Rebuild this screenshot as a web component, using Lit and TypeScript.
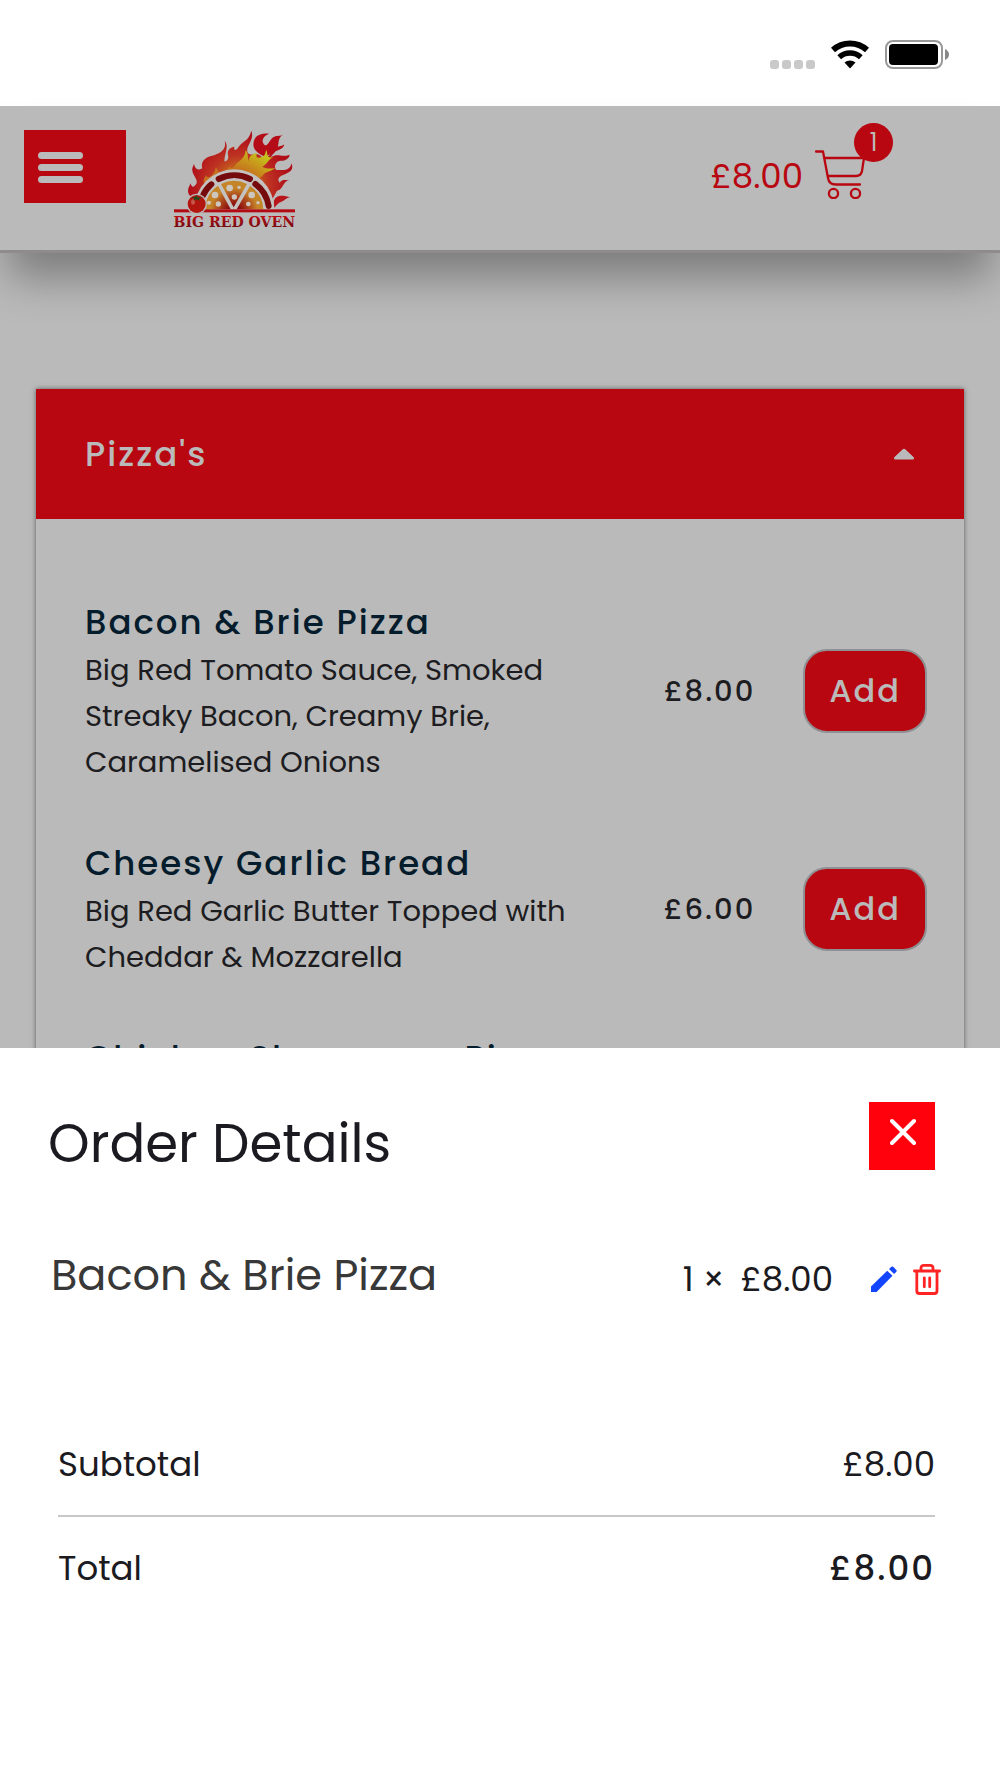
import { LitElement, html, css, svg, nothing } from "lit";
import { customElement, property, state } from "lit/decorators.js";

interface Dish {
  name: string;
  description?: string;
  price?: string;
}

const DISHES: Dish[] = [
  {
    name: "Bacon & Brie Pizza",
    description: "Big Red Tomato Sauce, Smoked Streaky Bacon, Creamy Brie, Caramelised Onions",
    price: "£8.00",
  },
  {
    name: "Cheesy Garlic Bread",
    description: "Big Red Garlic Butter Topped with Cheddar & Mozzarella",
    price: "£6.00",
  },
  {
    name: "Chicken Shawarma Pizza",
  },
];

@customElement("status-bar")
export class StatusBar extends LitElement {
  static styles = css`
    :host {
      display: flex;
      justify-content: flex-end;
      align-items: flex-end;
      gap: 16px;
      padding: 40px 51px 37px;
      background: #fff;
    }
    svg {
      display: block;
    }
  `;

  render() {
    return html`
      <svg width="45" height="29" viewBox="0 0 45 29" fill="#c9c9c9" aria-hidden="true">
        ${[0, 12, 24, 36].map((x) => svg`<rect x=${x} y="20" width="9" height="9" rx="3" />`)}
      </svg>
      <svg width="38" height="29" viewBox="0 0 38 29" fill="none" stroke="#000" aria-hidden="true">
        <path d="M2 10 A25.5 25.5 0 0 1 36 10" stroke-width="6" />
        <path d="M8.200 17.200 A16 16 0 0 1 29.800 17.200" stroke-width="5.500" />
        <path d="M19 28.500 L13.500 22.600 A8 8 0 0 1 24.500 22.600 Z" fill="#000" stroke="none" />
      </svg>
      <svg width="64" height="29" viewBox="0 0 64 29" aria-hidden="true">
        <rect x="1" y="1" width="56" height="27" rx="7" fill="none" stroke="#999" stroke-width="2" />
        <rect x="4" y="4" width="49" height="21" rx="4" fill="#000" />
        <path d="M60 9 Q64 11 64 14.500 Q64 18 60 20 Z" fill="#888" />
      </svg>
    `;
  }
}

@customElement("oven-logo")
export class OvenLogo extends LitElement {
  static styles = css`
    :host {
      display: block;
    }
    svg {
      display: block;
      overflow: visible;
    }
    .word {
      font: bold 47px "DejaVu Serif Condensed", "DejaVu Serif", serif;
    }
  `;

  render() {
    return html`
      <svg width="121" height="98" viewBox="27 24 363 294" role="img" aria-label="Big Red Oven">
        <defs>
          <radialGradient id="fire" gradientUnits="userSpaceOnUse" cx="222" cy="190" r="165">
            <stop offset="0" stop-color="#c98a1c" />
            <stop offset="0.3" stop-color="#c4651d" />
            <stop offset="0.55" stop-color="#bd3222" />
            <stop offset="0.9" stop-color="#b00f19" />
          </radialGradient>
          <radialGradient id="glow" gradientUnits="userSpaceOnUse" cx="190" cy="262" r="200">
            <stop offset="0.6" stop-color="#c66f1d" />
            <stop offset="0.8" stop-color="#c89a1c" />
            <stop offset="0.95" stop-color="#c4bf1c" />
          </radialGradient>
          <radialGradient id="slice" gradientUnits="userSpaceOnUse" cx="207" cy="268" r="88">
            <stop offset="0.2" stop-color="#8a0b0e" />
            <stop offset="0.55" stop-color="#ad4a1c" />
            <stop offset="0.8" stop-color="#c48529" />
          </radialGradient>
          <linearGradient id="ink" x1="0" y1="0" x2="0" y2="1">
            <stop offset="0.2" stop-color="#c00c15" />
            <stop offset="1" stop-color="#5e090b" />
          </linearGradient>
        </defs>

        <path fill="url(#fire)" d="M80 226 C62 212 70 198 77 184 C79 196 86 198 93 187 C102 174 82 160 82 145 C80 137 86 131 87 125
          C90 143 103 146 112 139 C106 120 120 105 142 101 C164 95 186 84 179 56 C193 74 178 96 178 118 C186 118 192 112 189 98
          C186 84 196 76 208 74 C206 86 212 88 220 76 C230 58 252 58 259 26 C270 56 240 72 248 92 C258 104 276 92 284 100
          L300 112 C316 96 332 82 338 62 C345 84 322 94 318 106 C338 92 350 108 374 98 C372 112 356 118 346 116 C330 118 326 136 334 144
          C350 142 372 152 380 124 C388 148 368 152 356 158 C340 164 336 172 344 182 C352 170 362 176 372 174 C352 180 356 202 336 206
          L326 224 L300 260 L110 260 Z" />
        <path fill="#b50d17" d="M300 104 C272 92 262 78 266 60 C270 38 292 34 312 35 C292 44 288 58 298 68 C306 76 312 58 322 48
          C332 38 344 44 353 38 C334 52 346 70 334 76 C348 70 354 72 358 66 C356 84 336 82 322 94 Z" />
        <path fill="#b9161c" d="M326 240 C330 218 352 218 376 226 C362 228 360 236 348 240 C340 242 334 250 328 258 Z" />
        <path fill="url(#glow)" d="M116 182 C114 172 120 168 122 160 C128 170 136 164 142 158 C148 152 152 144 152 136 C160 146 160 154 168 152
          C182 150 186 138 196 134 C198 142 206 138 210 130 C218 118 240 112 242 84 C252 96 246 108 252 118 C250 102 262 94 276 94
          C270 104 278 110 288 106 C302 102 300 92 304 84 C310 98 302 108 324 106 C306 116 306 128 292 134 C306 142 318 140 330 138
          C318 150 300 148 292 162 L280 172 L210 150 L140 172 Z" />

        <path fill="#c4c2c0" d="M88 262 A120 120 0 0 1 328 262 Z" />
        <g fill="none" stroke="#760b0e" stroke-width="18" stroke-linecap="round">
          <path d="M113 222 A103 103 0 0 1 139 187" />
          <path d="M161 171 A103 103 0 0 1 255 171" />
          <path d="M271 186 A103 103 0 0 1 311 252" />
        </g>
        <path fill="url(#slice)" d="M121 262 A86 86 0 0 1 159 191 L197 262 Z" />
        <path fill="url(#slice)" d="M206 256 L168 186 A86 86 0 0 1 246 186 Z" />
        <path fill="url(#slice)" d="M215 262 L255 192 A86 86 0 0 1 295 262 Z" />
        <g fill="#cdc6be">
          <circle cx="194" cy="198" r="10" /><circle cx="222" cy="196" r="5" /><circle cx="208" cy="225" r="8" />
          <circle cx="150" cy="219" r="10" /><circle cx="160" cy="246" r="8" /><circle cx="132" cy="242" r="6" />
          <circle cx="260" cy="219" r="10" /><circle cx="250" cy="246" r="7" /><circle cx="279" cy="242" r="5" />
        </g>
        <rect x="27" y="262" width="363" height="9" fill="#b30b14" />
        <circle cx="95" cy="246" r="31" fill="#bababa" />
        <circle cx="95" cy="246" r="27" fill="#b3160f" />
        <ellipse cx="84" cy="240" rx="6" ry="8" fill="#c9564a" />
        <path fill="#1d4a1c" d="M78 225 L90 226 L94 220 L98 226 L112 227 L102 231 L104 236 L94 232 L86 236 L88 230 Z" />
        <text class="word" x="208" y="314" text-anchor="middle" fill="url(#ink)">BIG RED OVEN</text>
      </svg>
    `;
  }
}

@customElement("site-header")
export class SiteHeader extends LitElement {
  @property() total = "";
  @property({ type: Number }) count = 0;

  static styles = css`
    :host {
      display: flex;
      align-items: flex-start;
      padding: 24px 135px 22px 24px;
      background: #bababa;
      border-bottom: 3px solid #8f8b8c;
      box-shadow: 0 32px 44px -8px rgba(0, 0, 0, 0.34);
    }
    .menu {
      display: flex;
      padding: 22px 43px 20px 14px;
      border: 0;
      background: #b80710;
    }
    .logo {
      margin-left: 48px;
    }
    .basket {
      display: flex;
      align-items: flex-start;
      gap: 12px;
      margin: 20px 0 0 auto;
      color: #b80710;
      text-decoration: none;
    }
    .total {
      font-size: 34px;
      line-height: 53px;
    }
    .cart {
      position: relative;
      display: flex;
    }
    .badge {
      position: absolute;
      top: -27px;
      left: 39px;
      width: 39px;
      border-radius: 50%;
      background: #b80710;
      color: #bababa;
      font-size: 24px;
      line-height: 39px;
      text-align: center;
    }
    svg {
      display: block;
    }
  `;

  render() {
    return html`
      <button class="menu" aria-label="Menu">
        <svg width="45" height="31" viewBox="0 0 45 31" fill="#bababa">
          <rect width="45" height="7" rx="3.500" />
          <rect y="12" width="45" height="7" rx="3.500" />
          <rect y="24" width="45" height="7" rx="3.500" />
        </svg>
      </button>
      <oven-logo class="logo"></oven-logo>
      <a class="basket" href="#basket">
        <span class="total">${this.total}</span>
        <span class="cart">
          <svg width="50" height="49" viewBox="0 0 50 49" fill="none" stroke="#b80710" stroke-width="2.300" stroke-linecap="round" stroke-linejoin="round">
            <path d="M1 1.500 H8 L13 28 Q14 34.500 21 34.500 H45" />
            <path d="M9.500 8 H49 L47 21 Q46 26 41 26 H13" />
            <circle cx="18.500" cy="43.500" r="4.600" />
            <circle cx="40.500" cy="43.500" r="4.600" />
          </svg>
          <span class="badge">${this.count}</span>
        </span>
      </a>
    `;
  }
}

@customElement("menu-section")
export class MenuSection extends LitElement {
  @property() heading = "";
  @property({ attribute: false }) dishes: Dish[] = [];

  static styles = css`
    :host {
      display: block;
      background: #bababa;
      box-shadow: 0 0 5px rgba(0, 0, 0, 0.5);
    }
    .heading {
      margin: 0;
      font: inherit;
    }
    .toggle {
      display: flex;
      justify-content: space-between;
      align-items: center;
      width: 100%;
      padding: 40px 49px;
      border: 0;
      background: #b80710;
      color: #bababa;
      font: inherit;
      font-size: 34px;
      font-weight: 500;
      line-height: 50px;
      letter-spacing: 2px;
    }
    .dishes {
      display: flex;
      flex-direction: column;
      gap: 53px;
      margin: 0;
      padding: 78px 37px 78px 49px;
      list-style: none;
    }
    .dish {
      display: flex;
      align-items: center;
    }
    .info {
      flex: 1;
      margin-right: 64px;
    }
    .name {
      margin: 0;
      color: #051c2c;
      font-size: 34px;
      font-weight: 500;
      line-height: 50px;
      letter-spacing: 2px;
    }
    .text {
      margin: 0;
      color: #1c1c21;
      font-size: 29px;
      line-height: 46px;
    }
    .price {
      margin-right: 48px;
      color: #1c1c21;
      font-size: 29px;
      font-weight: 500;
      letter-spacing: 2px;
    }
    .add {
      padding: 15px 24px;
      border: 2px solid #8f9094;
      border-radius: 24px;
      background: #b80710;
      color: #bababa;
      font: inherit;
      font-size: 32px;
      font-weight: 500;
      line-height: 50px;
      letter-spacing: 2px;
    }
  `;

  render() {
    return html`
      <h2 class="heading">
        <button class="toggle" aria-expanded="true">
          <span>${this.heading}</span>
          <svg width="22" height="12" viewBox="0 0 22 12" fill="#bababa" aria-hidden="true">
            <path d="M2.500 11.500 Q0 11 1.500 9 L9.500 1.500 Q11 0 12.500 1.500 L20.500 9 Q22 11 19.500 11.500 Z" />
          </svg>
        </button>
      </h2>
      <ul class="dishes">
        ${this.dishes.map(
          (dish) => html`
            <li class="dish">
              <div class="info">
                <h3 class="name">${dish.name}</h3>
                ${dish.description ? html`<p class="text">${dish.description}</p>` : nothing}
              </div>
              ${dish.price
                ? html`<span class="price">${dish.price}</span>
                    <button class="add">Add</button>`
                : nothing}
            </li>
          `,
        )}
      </ul>
    `;
  }
}

@customElement("order-sheet")
export class OrderSheet extends LitElement {
  static styles = css`
    :host {
      display: block;
      padding: 54px 65px 185px 48px;
      background: #fff;
      color: #1b1a21;
    }
    .top,
    .line,
    .sum {
      display: flex;
      justify-content: space-between;
      align-items: center;
    }
    .title {
      margin: 16px 0 0;
      font-size: 53px;
      font-weight: 400;
      line-height: 52px;
    }
    .close {
      display: flex;
      padding: 16px 19px 24px 21px;
      border: 0;
      background: #ff000d;
    }
    .line {
      margin: 69px -6px 0 3px;
      line-height: 64px;
    }
    .dish {
      color: #383838;
      font-size: 43px;
    }
    .detail {
      display: flex;
      align-items: center;
      gap: 16px;
      padding-top: 8px;
      font-size: 34px;
    }
    .icon {
      display: flex;
      padding: 0;
      border: 0;
      background: none;
    }
    .edit {
      margin-left: 22px;
    }
    .sums {
      margin: 128px 0 0 10px;
    }
    .sum {
      font-size: 34px;
      line-height: 50px;
    }
    .sum + .sum {
      margin-top: 26px;
      padding-top: 26px;
      border-top: 2px solid #c8c8c8;
    }
    .value {
      margin: 0;
    }
    .grand {
      font-weight: 500;
      letter-spacing: 2px;
    }
    svg {
      display: block;
    }
  `;

  render() {
    return html`
      <div class="top">
        <h2 class="title">Order Details</h2>
        <button class="close" aria-label="Close">
          <svg width="26" height="28" viewBox="0 0 26 28" fill="none" stroke="#fff" stroke-width="4" stroke-linecap="round">
            <path d="M2 3 L24 25 M24 3 L2 25" />
          </svg>
        </button>
      </div>
      <div class="line">
        <span class="dish">Bacon &amp; Brie Pizza</span>
        <div class="detail">
          <span>1 ×</span>
          <span>£8.00</span>
          <button class="icon edit" aria-label="Edit item">
            <svg width="26" height="26" viewBox="0 0 26 26" fill="#1345ff">
              <path d="M0 26 V20.500 L16.200 4.800 L21.500 9.800 L5.600 26 Z" />
              <path d="M18 3 L20.400 0.800 Q21.300 0 22.200 0.800 L25.300 3.900 Q26.200 4.800 25.300 5.700 L23.100 8 Z" />
            </svg>
          </button>
          <button class="icon" aria-label="Remove item">
            <svg width="28" height="31" viewBox="0 0 28 31" fill="none" stroke="#ff2323" stroke-width="2.800" stroke-linecap="round" stroke-linejoin="round">
              <path d="M1.400 7 H26.600 M3.800 7 V27 Q3.800 29.500 6.400 29.500 H21.400 Q24 29.500 24 27 V7 M8 6.500 V4 Q8 1.400 11 1.400 H17 Q20 1.400 20 4 V6.500" />
              <path d="M11.300 13.800 V22.800 M16.700 13.800 V22.800" />
            </svg>
          </button>
        </div>
      </div>
      <dl class="sums">
        <div class="sum">
          <dt>Subtotal</dt>
          <dd class="value">£8.00</dd>
        </div>
        <div class="sum">
          <dt>Total</dt>
          <dd class="value grand">£8.00</dd>
        </div>
      </dl>
    `;
  }
}

@customElement("app-root")
export class AppRoot extends LitElement {
  @state() private dishes = DISHES;

  static styles = css`
    :host {
      display: grid;
      grid-template-rows: auto auto minmax(0, 1fr) auto;
      grid-template-columns: minmax(0, 1fr);
      height: 100vh;
      background: #bababa;
      font-family: Poppins, Inter, "Liberation Sans", sans-serif;
    }
    .menu {
      padding: 136px 36px 0;
      overflow: hidden;
    }
    .header {
      z-index: 1;
    }
    .sheet {
      z-index: 2;
    }
  `;

  render() {
    return html`
      <status-bar></status-bar>
      <site-header class="header" total="£8.00" count="1"></site-header>
      <main class="menu">
        <menu-section heading="Pizza's" .dishes=${this.dishes}></menu-section>
      </main>
      <order-sheet class="sheet"></order-sheet>
    `;
  }
}
